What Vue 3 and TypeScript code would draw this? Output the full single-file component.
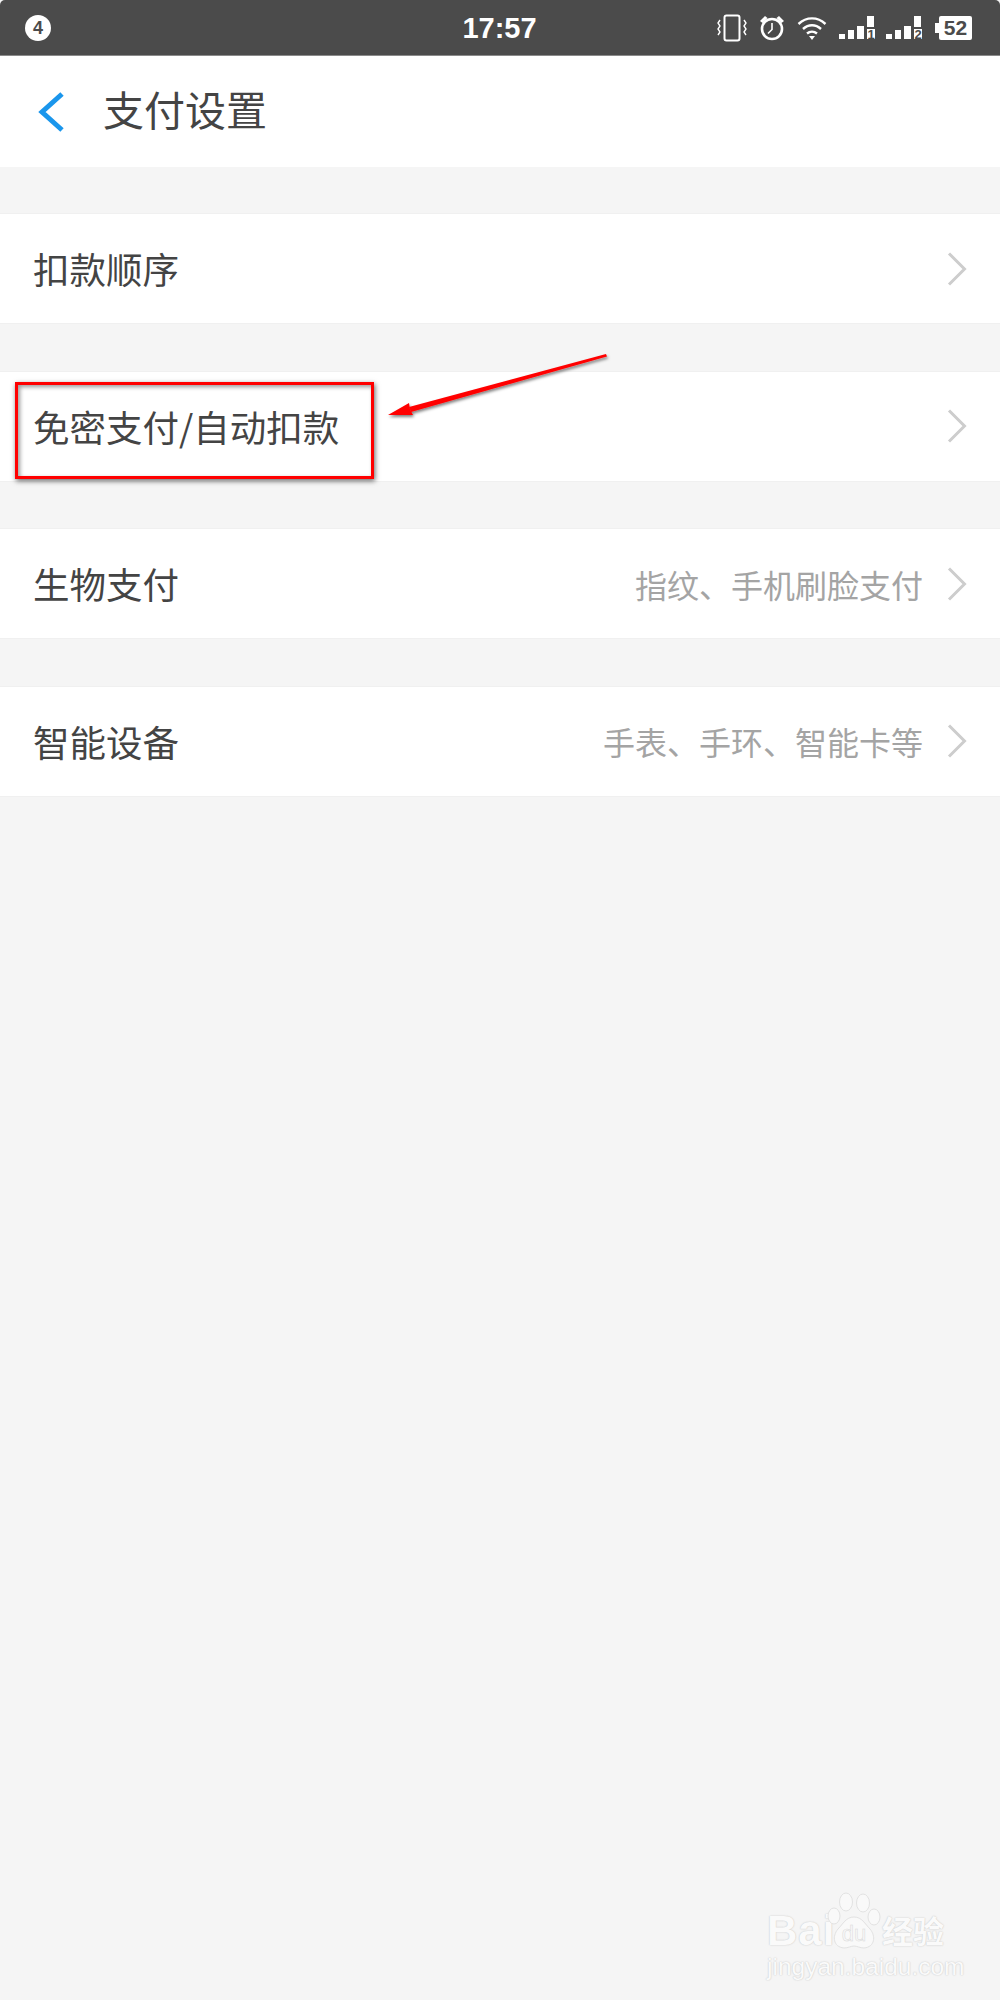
<script setup lang="ts">
interface PayRow {
  label: string
  value?: string
}

const rows: PayRow[] = [
  { label: '扣款顺序' },
  { label: '免密支付/自动扣款' },
  { label: '生物支付', value: '指纹、手机刷脸支付' },
  { label: '智能设备', value: '手表、手环、智能卡等' }
]
</script>

<template>
  <div class="page">
    <div class="status">
      <div class="status-left"><span class="badge">4</span></div>
      <div class="time">17:57</div>
      <div class="status-right">
        <svg class="ic" width="30" height="28" viewBox="0 0 30 28">
          <rect x="7.5" y="1.5" width="15" height="25" rx="2" fill="none" stroke="#fff" stroke-width="2" />
          <path d="M3 6l-2 3 2 3-2 3 2 3-2 3M27 6l2 3-2 3 2 3-2 3 2 3" fill="none" stroke="#fff" stroke-width="1.4" />
        </svg>
        <svg class="ic" width="26" height="26" viewBox="0 0 26 26">
          <circle cx="13" cy="14" r="10" fill="none" stroke="#fff" stroke-width="2.6" />
          <path d="M13 8v6.5l-4 4" fill="none" stroke="#fff" stroke-width="1.6" />
          <path d="M1 6l5-5 2.5 2-5 5zM25 6l-5-5-2.5 2 5 5z" fill="#fff" />
        </svg>
        <svg class="ic" width="30" height="24" viewBox="0 0 30 24">
          <path d="M1.5 8c8-7.500 19-7.500 27 0M6 13c5.500-5 12.500-5 18 0M10 17.500c3-2.500 7-2.500 10 0" fill="none" stroke="#fff" stroke-width="2.400" />
          <path d="M12 20h6l-3 4z" fill="#fff" />
        </svg>
        <svg class="ic signal first" width="37" height="30" viewBox="0 0 37 30">
          <path d="M0 18h6v5H0zM9 14h6v9H9zM18 10h7v13h-7zM28 0h7v11h-7zM28 13h8v10h-8z" fill="#fff" />
          <text x="32" y="23" class="sim">1</text>
        </svg>
        <svg class="ic signal" width="37" height="30" viewBox="0 0 37 30">
          <path d="M0 18h6v5H0zM9 14h6v9H9zM18 10h7v13h-7zM28 0h7v11h-7zM28 13h8v10h-8z" fill="#fff" />
          <text x="32" y="23" class="sim">2</text>
        </svg>
        <div class="battery"><span>52</span></div>
      </div>
    </div>

    <header class="nav">
      <svg class="back" width="26" height="40" viewBox="0 0 26 40">
        <path d="M24 2L4 20l20 18" fill="none" stroke="#1a96ec" stroke-width="5" />
      </svg>
      <h1>支付设置</h1>
    </header>

    <div class="list">
      <div v-for="row in rows" :key="row.label" class="row">
        <span class="label">{{ row.label }}</span>
        <span v-if="row.value" class="value">{{ row.value }}</span>
        <svg class="chev" width="20" height="34" viewBox="0 0 20 34">
          <path d="M2 1.500L17.500 17 2 32.500" fill="none" stroke="#cdcdcd" stroke-width="3" />
        </svg>
      </div>
    </div>

    <!-- annotation drawn on top of the screenshot -->
    <div class="mark-box"></div>
    <svg class="mark-arrow" width="230" height="80" viewBox="0 0 230 80">
      <defs>
        <filter id="arrow-shadow" x="-10%" y="-30%" width="120%" height="170%">
          <feDropShadow dx="1" dy="2" stdDeviation="1.500" flood-color="#000" flood-opacity="0.5" />
        </filter>
      </defs>
      <g filter="url(#arrow-shadow)" fill="#f00">
        <path d="M224 3l1 2.500L29 61l-2-5z" />
        <path d="M6 64L27 52l1 6 3 6z" />
      </g>
    </svg>

    <div class="watermark">
      <span class="wm-bai">Bai</span>
      <svg class="wm-paw" width="56" height="60" viewBox="0 0 56 60">
        <g fill="#f9f9f9" stroke="#e2e2e2" stroke-width="1">
          <ellipse cx="20" cy="10" rx="6.500" ry="9" />
          <ellipse cx="37" cy="11" rx="6.500" ry="9" />
          <ellipse cx="8" cy="24" rx="6" ry="8" />
          <ellipse cx="48" cy="25" rx="6" ry="8" />
          <path d="M28 25c8 0 11 7 16 12 6 7 5 18-6 19-4 0-7-2-10-2s-6 2-10 2c-11-1-12-12-6-19 5-5 8-12 16-12z" />
        </g>
        <text x="28" y="49" class="wm-du">du</text>
      </svg>
      <span class="wm-cn">经验</span>
      <span class="wm-url">jingyan.baidu.com</span>
    </div>
  </div>
</template>

<style>
html,
body {
  background: #f5f5f5;
}
</style>

<style scoped>
.page {
  position: relative;
  width: 1000px;
  height: 2000px;
  overflow: hidden;
  background: #f5f5f5;
  font-family: "Noto Sans CJK SC", "Liberation Sans", sans-serif;
}

.status {
  display: grid;
  grid-template-columns: 1fr auto 1fr;
  align-items: center;
  height: 56px;
  box-sizing: border-box;
  padding: 0 28px 0 25px;
  background: #4b4b4b;
  border-bottom: 1px solid #8a8a8a;
  border-radius: 5px 5px 0 0;
  color: #fff;
}

.status-left {
  display: flex;
}

.badge {
  width: 26px;
  height: 26px;
  border-radius: 50%;
  background: #fff;
  color: #4b4b4b;
  font: bold 18px/26px "Liberation Sans", sans-serif;
  text-align: center;
}

.time {
  padding: 2px 0 0 2px;
  font: bold 29px/1 "Liberation Sans", sans-serif;
}

.status-right {
  display: flex;
  justify-content: flex-end;
  align-items: center;
  gap: 12px;
}

.signal {
  margin-top: 6px;
}

.signal.first {
  margin-right: -2px;
}

.sim {
  font: bold 13px "Liberation Sans", sans-serif;
  fill: #4b4b4b;
  text-anchor: middle;
}

.battery {
  position: relative;
  width: 33px;
  height: 24px;
  margin-left: 4px;
  border-radius: 2px;
  background: #fff;
  color: #4b4b4b;
  font: bold 21px/24px "Liberation Sans", sans-serif;
  text-align: center;
}

.battery::before {
  content: "";
  position: absolute;
  left: -4px;
  top: 7px;
  width: 4px;
  height: 10px;
  background: #fff;
}

.nav {
  display: flex;
  align-items: center;
  height: 111px;
  padding-left: 38px;
  background: #fff;
}

.back {
  margin-right: 39px;
}

.nav h1 {
  margin: 0 0 8px;
  font-size: 41px;
  font-weight: 400;
  color: #444;
}

.list {
  display: flex;
  flex-direction: column;
  gap: 48.500px;
  padding-top: 47px;
}

.row {
  display: flex;
  align-items: center;
  height: 109px;
  padding: 0 33px 0 33px;
  background: #fff;
  box-shadow: 0 0 0 1px #f0f0f0;
}

.label {
  flex: 1;
  font-size: 36.500px;
  color: #444;
}

.value {
  margin-right: 24px;
  font-size: 32px;
  color: #a4a4a4;
}

.mark-box {
  position: absolute;
  left: 15px;
  top: 382px;
  width: 359px;
  height: 97px;
  box-sizing: border-box;
  border: 3px solid #f00;
  box-shadow: 1px 2px 5px rgba(0, 0, 0, 0.6), inset 2px 2px 4px rgba(0, 0, 0, 0.4);
}

.mark-arrow {
  position: absolute;
  left: 382px;
  top: 351px;
}

.watermark {
  position: absolute;
  left: 767px;
  top: 1892px;
  width: 180px;
  height: 90px;
  color: #fafafa;
}

.wm-bai,
.wm-cn,
.wm-url {
  position: absolute;
  text-shadow: 0 0 1px #c9c9c9, 0 0 2px #d8d8d8;
}

.wm-bai {
  left: 0;
  top: 18px;
  font: bold 42px/1 "Liberation Sans", sans-serif;
  letter-spacing: 1px;
}

.wm-paw {
  position: absolute;
  left: 59px;
  top: 0;
}

.wm-du {
  font: 22px "Liberation Sans", sans-serif;
  fill: #f9f9f9;
  stroke: #d8d8d8;
  stroke-width: 0.5;
  text-anchor: middle;
}

.wm-cn {
  left: 115px;
  top: 22px;
  font-size: 31px;
  line-height: 1;
  font-weight: 700;
}

.wm-url {
  left: 0;
  top: 62px;
  font: 24.500px/1.1 "Liberation Sans", sans-serif;
}
</style>
